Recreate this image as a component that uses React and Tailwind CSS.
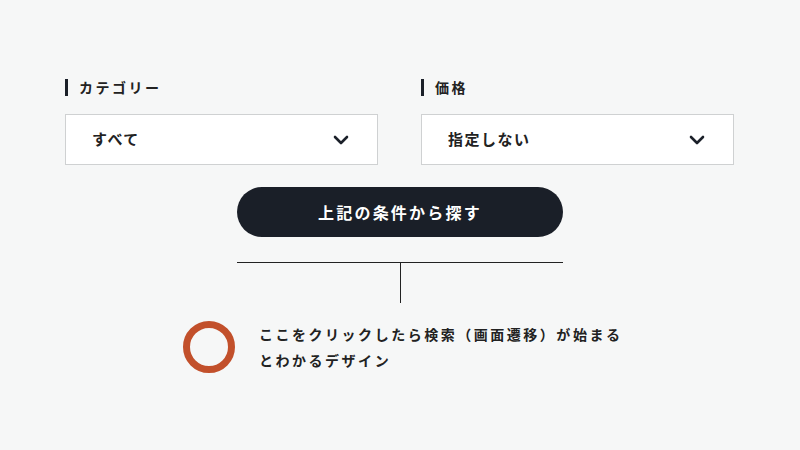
import { ChevronDown } from "lucide-react";

const font = { fontFamily: '"Noto Sans CJK JP", "Noto Sans", sans-serif' };

function Field({ label, value }) {
  return (
    <div className="flex flex-col w-[313px]">
      <div className="flex items-center h-[18px]">
        <span className="w-[3px] h-[17px] bg-[#1b2029]" />
        <span className="ml-[11px] text-[14px] font-bold tracking-[0.18em] text-[#222]">
          {label}
        </span>
      </div>
      <div className="mt-[18px] h-[51px] bg-white border border-[#cfd1d2] flex items-center justify-between pl-[26px] pr-[24px]">
        <span className="text-[15px] font-bold tracking-[0.1em] text-[#222]">{value}</span>
        <ChevronDown size={24} strokeWidth={2.6} className="text-[#1b2029]" />
      </div>
    </div>
  );
}

export default function App() {
  return (
    <div className="w-[800px] h-[450px] bg-[#f6f7f7] flex flex-col items-center" style={font}>
      <div className="mt-[78px] w-full pl-[65px] flex gap-[43px]">
        <Field label="カテゴリー" value="すべて" />
        <Field label="価格" value="指定しない" />
      </div>

      <button className="mt-[22px] w-[326px] h-[50px] rounded-full bg-[#1a1f28] text-white text-[16px] font-bold tracking-[0.14em]">
        上記の条件から探す
      </button>

      <div className="mt-[25px] w-[326px] h-px bg-[#222]" />
      <div className="w-px h-[40px] bg-[#222]" />

      <div className="mt-[18px] w-full pl-[183px] flex items-center">
        <div className="w-[52px] h-[52px] rounded-full border-[7px] border-[#c2502b]" />
        <p className="ml-[24px] text-[14px] font-bold leading-[26px] tracking-[0.18em] text-[#222]">
          ここをクリックしたら検索（画面遷移）が始まる
          <br />
          とわかるデザイン
        </p>
      </div>
    </div>
  );
}
